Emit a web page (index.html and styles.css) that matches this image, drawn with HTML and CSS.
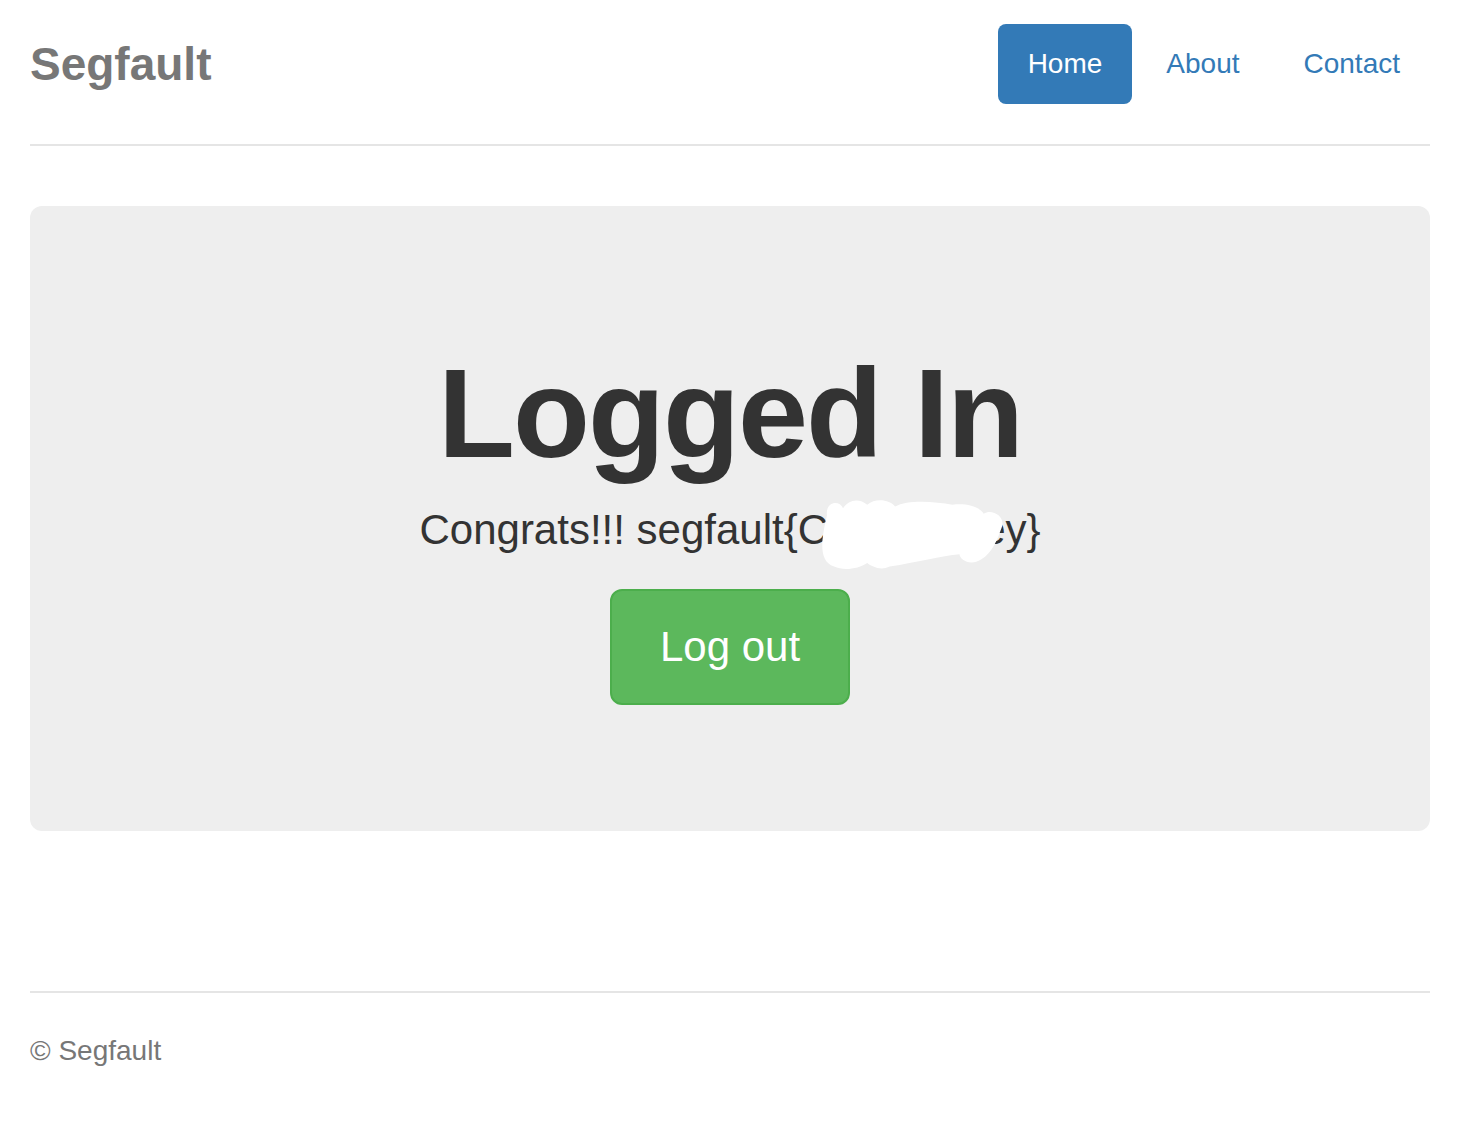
FILE: index.html
```html
<!DOCTYPE html>
<html lang="en">
<head>
    <meta charset="UTF-8" />
    <title>Segfault</title>
    <link rel="stylesheet" href="styles.css">
</head>
<body>

<div class="container">
    <div class="header">
        <h3 class="brand">Segfault</h3>
        <ul class="nav-pills">
            <li class="active"><a href="#">Home</a></li>
            <li><a href="#">About</a></li>
            <li><a href="#">Contact</a></li>
        </ul>
    </div>

    <div class="jumbotron">
        <h1>Logged In</h1>
        <p class="lead">Congrats!!! segfault{C<span class="redacted">ookie_ik<svg class="scribble" viewBox="0 0 210 85" preserveAspectRatio="none"><path d="M10,22 C8,6 24,4 28,14 C34,4 46,2 55,10 C64,2 80,4 86,12 C100,4 130,6 150,10 C165,8 180,12 185,20 C195,14 210,24 205,36 C200,50 195,64 182,72 C170,80 158,72 158,66 C138,68 110,75 80,80 C70,85 60,80 55,76 C45,83 28,85 18,80 C6,76 4,64 5,50 C6,40 8,30 10,22 Z" fill="#fff"/></svg></span>ey}</p>
        <p><a class="btn-logout" href="#">Log out</a></p>
    </div>

    <div class="footer">
        <p>&copy; Segfault</p>
    </div>
</div>

</body>
</html>
```

FILE: styles.css
```css
body {
    margin: 0;
    font-family: "Liberation Sans", Arial, sans-serif;
    color: #333;
    background-color: #fff;
}
.container {
    padding: 24px 40px 0 30px;
}
.header {
    display: flex;
    justify-content: space-between;
    align-items: center;
    padding-bottom: 40px;
    border-bottom: 2px solid #e5e5e5;
}
.brand {
    margin: 0;
    font-size: 46px;
    line-height: 80px;
    font-weight: bold;
    color: #777;
}
.nav-pills {
    display: flex;
    gap: 4px;
    margin: 0;
    padding: 0;
    list-style: none;
}
.nav-pills a {
    display: block;
    padding: 20px 30px;
    font-size: 28px;
    line-height: 40px;
    color: #337ab7;
    text-decoration: none;
    border-radius: 8px;
}
.nav-pills .active a {
    background-color: #337ab7;
    color: #fff;
}
.jumbotron {
    margin-top: 60px;
    padding: 99px 60px 96px;
    background-color: #eee;
    border-radius: 12px;
    text-align: center;
}
.jumbotron h1 {
    margin: 40px 0 17px;
    font-size: 126px;
    line-height: 1.1;
    font-weight: bold;
    letter-spacing: -2px;
}
.jumbotron p {
    margin: 0 0 30px;
}
.jumbotron .lead {
    font-size: 42px;
    line-height: 1.4;
    font-weight: 300;
    margin-bottom: 30px;
}
.redacted {
    position: relative;
}
.scribble {
    position: absolute;
    left: -10px;
    top: -10px;
    width: calc(100% + 34px);
    height: calc(100% + 28px);
}
.btn-logout {
    display: inline-block;
    padding: 28px 48px;
    font-size: 42px;
    line-height: 56px;
    color: #fff;
    text-decoration: none;
    background-color: #5cb85c;
    border: 2px solid #4cae4c;
    border-radius: 12px;
    vertical-align: top;
}
.footer {
    margin-top: 160px;
    padding-top: 38px;
    border-top: 2px solid #e5e5e5;
}
.footer p {
    margin: 0 0 40px;
    font-size: 28px;
    line-height: 40px;
    color: #777;
}
```
